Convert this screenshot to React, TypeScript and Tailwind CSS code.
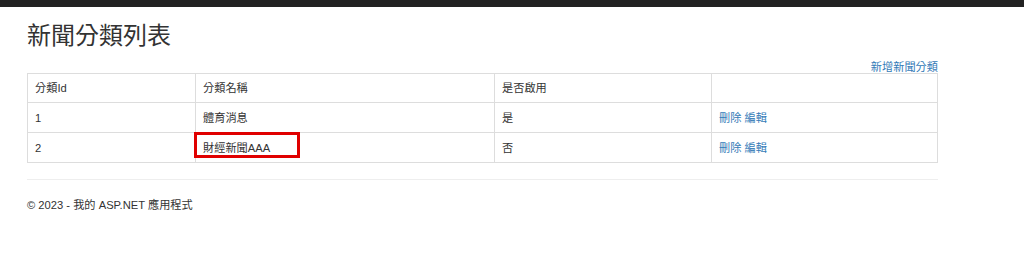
import React from "react";

const categories = [
  { id: 1, name: "體育消息", enabled: true },
  { id: 2, name: "財經新聞AAA", enabled: false },
];

export default function App() {
  return (
    <div
      className="min-h-[269px] bg-white text-[11.2px] leading-[16px] text-[#333]"
      style={{ fontFamily: '"Liberation Sans", "Noto Sans CJK TC", sans-serif' }}
    >
      <div className="h-[7px] bg-[#222]" />
      <div className="ml-[27px] w-[911px]">
        <h2 className="mt-[16px] mb-[9px] text-[24px] leading-[26px] font-normal">新聞分類列表</h2>
        <p className="flex justify-end pt-[1px] h-[15px]">
          <a href="#" className="text-[#337ab7]">新增新聞分類</a>
        </p>
        <table className="w-full border-collapse border border-[#ddd] mb-[16px]">
          <thead>
            <tr>
              <th className="w-[168px] border border-[#ddd] px-[7px] py-[6px] text-left font-normal">分類Id</th>
              <th className="w-[299px] border border-[#ddd] px-[7px] py-[6px] text-left font-normal">分類名稱</th>
              <th className="w-[217px] border border-[#ddd] px-[7px] py-[6px] text-left font-normal">是否啟用</th>
              <th className="border border-[#ddd] px-[7px] py-[6px] text-left font-normal"></th>
            </tr>
          </thead>
          <tbody>
            {categories.map((c) => (
              <tr key={c.id}>
                <td className="border border-[#ddd] px-[7px] py-[6.5px]">{c.id}</td>
                <td className="relative border border-[#ddd] px-[7px] py-[6.5px]">
                  {c.name}
                  {c.id === 2 && (
                    <span className="absolute left-[-2px] top-[-1px] w-[106px] h-[26px] border-[3px] border-[#e00000]" />
                  )}
                </td>
                <td className="border border-[#ddd] px-[7px] py-[6.5px]">{c.enabled ? "是" : "否"}</td>
                <td className="border border-[#ddd] px-[7px] py-[6.5px]">
                  <a href="#" className="text-[#337ab7]">刪除</a>{" "}
                  <a href="#" className="text-[#337ab7]">編輯</a>
                </td>
              </tr>
            ))}
          </tbody>
        </table>
        <hr className="border-t border-[#eee]" />
        <footer className="mt-[17px]">
          <p>© 2023 - 我的 ASP.NET 應用程式</p>
        </footer>
      </div>
    </div>
  );
}
